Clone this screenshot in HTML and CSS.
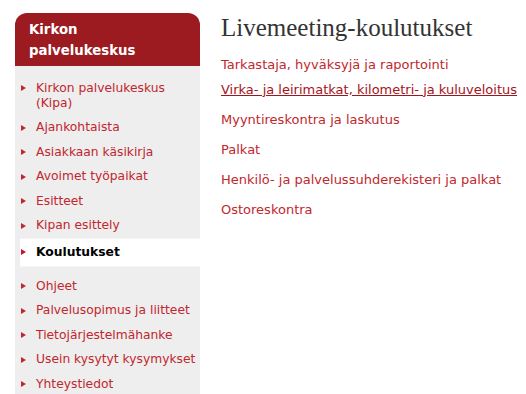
FILE: index.html
```html
<!DOCTYPE html>
<html lang="fi">
<head>
<meta charset="utf-8">
<title>Livemeeting-koulutukset</title>
<link rel="stylesheet" href="styles.css">
</head>
<body>
<div class="page">
  <nav class="sidebar">
    <div class="side-head">Kirkon palvelukeskus</div>
    <ul class="side-list">
      <li class="item"><span class="bullet"></span><a href="#">Kirkon palvelukeskus (Kipa)</a></li>
      <li class="item"><span class="bullet"></span><a href="#">Ajankohtaista</a></li>
      <li class="item"><span class="bullet"></span><a href="#">Asiakkaan käsikirja</a></li>
      <li class="item"><span class="bullet"></span><a href="#">Avoimet työpaikat</a></li>
      <li class="item"><span class="bullet"></span><a href="#">Esitteet</a></li>
      <li class="item"><span class="bullet"></span><a href="#">Kipan esittely</a></li>
      <li class="item active"><span class="bullet"></span><a href="#">Koulutukset</a></li>
      <li class="item"><span class="bullet"></span><a href="#">Ohjeet</a></li>
      <li class="item"><span class="bullet"></span><a href="#">Palvelusopimus ja liitteet</a></li>
      <li class="item"><span class="bullet"></span><a href="#">Tietojärjestelmähanke</a></li>
      <li class="item"><span class="bullet"></span><a href="#">Usein kysytyt kysymykset</a></li>
      <li class="item last"><span class="bullet"></span><a href="#">Yhteystiedot</a></li>
    </ul>
  </nav>
  <main class="content">
    <h1 class="title">Livemeeting-koulutukset</h1>
    <ul class="links">
      <li class="first"><a href="#">Tarkastaja, hyväksyjä ja raportointi</a></li>
      <li><a href="#" class="hover">Virka- ja leirimatkat, kilometri- ja kuluveloitus</a></li>
      <li><a href="#">Myyntireskontra ja laskutus</a></li>
      <li><a href="#">Palkat</a></li>
      <li><a href="#">Henkilö- ja palvelussuhderekisteri ja palkat</a></li>
      <li><a href="#">Ostoreskontra</a></li>
    </ul>
  </main>
</div>
</body>
</html>
```

FILE: styles.css
```css
html, body {
  margin: 0;
  padding: 0;
  background: #ffffff;
  overflow: hidden;
}

body {
  font-family: "DejaVu Sans", Verdana, sans-serif;
}

a {
  text-decoration: none;
}

.page {
  display: flex;
  align-items: stretch;
  gap: 21px;
  padding: 13px 0 0 15px;
  height: 100vh;
  box-sizing: border-box;
}

.sidebar {
  width: 185px;
  flex: none;
  display: flex;
  flex-direction: column;
}

.side-head {
  background: #9c1b21;
  color: #ffffff;
  font-weight: bold;
  font-size: 13.3px;
  line-height: 21px;
  padding: 6px 40px 5px 14px;
  border-radius: 12px 12px 0 0;
}

.side-list {
  flex: 1;
  list-style: none;
  margin: 0;
  padding: 9.75px 0 0 5px;
  background: #eeeeee;
  overflow: hidden;
}

.item {
  display: flex;
  align-items: flex-start;
  font-size: 12.3px;
  line-height: 15px;
  padding: 4.75px 0;
}

.item.last {
  padding-bottom: 0;
}

.item a {
  color: #c1272d;
}

.bullet {
  flex: none;
  width: 0;
  height: 0;
  margin: 4.5px 10px 0 1px;
  border-left: 5px solid #c1272d;
  border-top: 3px solid transparent;
  border-bottom: 3px solid transparent;
}

.item.active {
  background: #ffffff;
  padding: 6px 0;
  margin-bottom: 7px;
  border-top: 1px solid #f5f5f5;
  border-bottom: 1px solid #f5f5f5;
}

.item.active a {
  color: #000000;
  font-weight: bold;
}

.item.active .bullet {
  border-left-color: #c8102e;
}

.content {
  flex: 1;
  min-width: 0;
}

.title {
  margin: 0;
  font-family: "Liberation Serif", "Times New Roman", serif;
  font-weight: normal;
  font-size: 25px;
  line-height: 30px;
  color: #333333;
}

.links {
  list-style: none;
  margin: 11.5px 0 0 0;
  padding: 0;
}

.links li {
  font-size: 13px;
  line-height: 20px;
  margin-bottom: 10px;
  white-space: nowrap;
}

.links li.first {
  margin-bottom: 5px;
}

.links a {
  color: #c1272d;
}

.links a.hover {
  color: #a3151c;
  text-decoration: underline;
}
```
